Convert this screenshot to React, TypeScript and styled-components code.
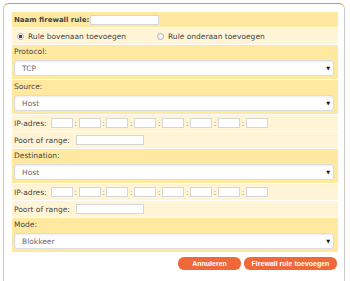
import React from 'react';
import styled, { createGlobalStyle } from 'styled-components';

const GlobalStyle = createGlobalStyle`
  html, body {
    margin: 0;
    padding: 0;
    background: #ffffff;
    overflow: hidden;
  }
  body {
    font-family: 'DejaVu Sans', Verdana, sans-serif;
    font-size: 7.5px;
    color: #444444;
  }
`;

const Dialog = styled.div`
  margin: 3px 0 0 3px;
  width: 342px;
  min-height: 280px;
  box-sizing: border-box;
  border: 1px solid #c9c9c9;
  border-top-color: #c7a04a;
  border-bottom: none;
  border-radius: 6px 6px 0 0;
  padding: 8px 6px 0 8px;
`;

const Form = styled.div`
  display: flex;
  flex-direction: column;
  gap: 1px;
`;

const Row = styled.div<{ $light?: boolean; $h?: number }>`
  display: flex;
  align-items: center;
  height: ${(p) => p.$h ?? 16}px;
  padding-left: 2px;
  background: ${(p) => (p.$light ? '#fff5d6' : '#ffe9a1')};
`;

const Section = styled.div`
  display: flex;
  flex-direction: column;
  gap: 2px;
  padding: 1px 4px 3px 2px;
  background: #ffe9a1;
`;

const Label = styled.span<{ $bold?: boolean; $space?: number }>`
  font-weight: ${(p) => (p.$bold ? 700 : 400)};
  font-size: ${(p) => (p.$bold ? '7px' : 'inherit')};
  color: #444444;
  white-space: nowrap;
  margin-right: ${(p) => p.$space ?? 3}px;
`;

const SectionLabel = styled.div`
  height: 12px;
  line-height: 12px;
  color: #444444;
`;

const SelectBox = styled.div`
  display: flex;
  align-items: center;
  justify-content: space-between;
  height: 16px;
  box-sizing: border-box;
  padding: 0 3px 0 7px;
  background: #ffffff;
  border: 1px solid #dcdcdc;
  border-radius: 3px;
  box-shadow: inset 0 1px 2px rgba(0, 0, 0, 0.08);
  color: #6a6a6a;
`;

const Arrow = styled.span`
  font-size: 5px;
  color: #111111;
`;

const TextInput = styled.input<{ $w: number }>`
  width: ${(p) => p.$w}px;
  height: 10px;
  box-sizing: border-box;
  border: 1px solid #d6d6d6;
  background: #ffffff;
  padding: 0;
  margin: 0;
  font-size: 7px;
  outline: none;
`;

const Colon = styled.span`
  margin: 0 1.7px;
  color: #888888;
`;

const RadioItem = styled.label<{ $grow?: boolean }>`
  display: flex;
  align-items: center;
  gap: 4px;
  margin-left: 3px;
  flex: 0 0 ${(p) => (p.$grow ? '137px' : 'auto')};
  color: #444444;
  white-space: nowrap;
`;

const RadioDot = styled.span<{ $checked?: boolean }>`
  width: 7px;
  height: 7px;
  box-sizing: border-box;
  border-radius: 50%;
  border: 1px solid #b0b0b0;
  background: ${(p) =>
    p.$checked ? 'radial-gradient(circle, #444 0 1.6px, #f4f4f4 2px)' : '#f4f4f4'};
`;

const Buttons = styled.div`
  display: flex;
  justify-content: flex-end;
  gap: 3px;
  margin-top: 5px;
  padding-right: 1px;
`;

const Button = styled.button<{ $w: number }>`
  width: ${(p) => p.$w}px;
  height: 13px;
  padding: 0;
  border: none;
  border-radius: 6px;
  background: #f0673a;
  color: #ffffff;
  font-family: 'Liberation Sans', Arial, sans-serif;
  font-weight: 700;
  font-size: 7px;
`;

function Select({ value }: { value: string }) {
  return (
    <SelectBox>
      <span>{value}</span>
      <Arrow>▼</Arrow>
    </SelectBox>
  );
}

function IpRow() {
  const parts = Array.from({ length: 8 });
  return (
    <Row $light>
      <Label $space={4}>IP-adres:</Label>
      {parts.map((_, i) => (
        <React.Fragment key={i}>
          {i > 0 && <Colon>:</Colon>}
          <TextInput $w={22} />
        </React.Fragment>
      ))}
    </Row>
  );
}

function PortRow() {
  return (
    <Row $light>
      <Label $space={6}>Poort of range:</Label>
      <TextInput $w={68} />
    </Row>
  );
}

export default function App() {
  return (
    <>
      <GlobalStyle />
      <Dialog>
        <Form>
          <Row $h={15}>
            <Label $bold $space={1}>Naam firewall rule:</Label>
            <TextInput $w={69} />
          </Row>
          <Row $light>
            <RadioItem $grow>
              <RadioDot $checked />
              Rule bovenaan toevoegen
            </RadioItem>
            <RadioItem>
              <RadioDot />
              Rule onderaan toevoegen
            </RadioItem>
          </Row>
          <Section>
            <SectionLabel>Protocol:</SectionLabel>
            <Select value="TCP" />
          </Section>
          <Section>
            <SectionLabel>Source:</SectionLabel>
            <Select value="Host" />
          </Section>
          <IpRow />
          <PortRow />
          <Section>
            <SectionLabel>Destination:</SectionLabel>
            <Select value="Host" />
          </Section>
          <IpRow />
          <PortRow />
          <Section>
            <SectionLabel>Mode:</SectionLabel>
            <Select value="Blokkeer" />
          </Section>
        </Form>
        <Buttons>
          <Button $w={63}>Annuleren</Button>
          <Button $w={93}>Firewall rule toevoegen</Button>
        </Buttons>
      </Dialog>
    </>
  );
}
